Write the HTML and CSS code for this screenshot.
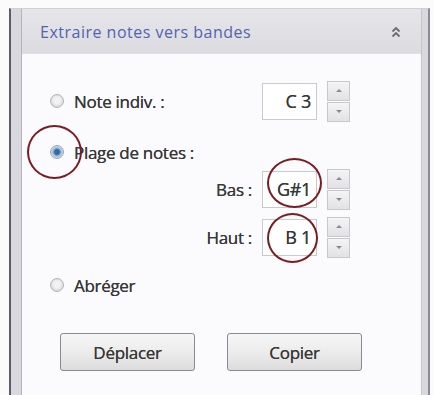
FILE: index.html
```html
<!DOCTYPE html>
<html lang="fr">
<head>
<meta charset="utf-8">
<link rel="stylesheet" href="styles.css">
</head>
<body>
<div class="screen">
  <div class="frame">
    <div class="panel">
      <div class="header">
        <span class="title">Extraire notes vers bandes</span>
        <svg class="chev" width="10" height="12" viewBox="0 0 10 12">
          <path d="M1.5 5.5 L5 2 L8.5 5.5 M1.5 10.5 L5 7 L8.5 10.5" fill="none" stroke="#6a6a70" stroke-width="1.8"/>
        </svg>
      </div>
      <div class="body">
        <div class="row r1">
          <label class="opt"><span class="radio"></span><span>Note indiv. :</span></label>
          <div class="field">
            <div class="box">C 3</div>
            <div class="spin"><span class="up"></span><span class="down"></span></div>
          </div>
        </div>
        <div class="row r2">
          <label class="opt"><span class="radio on"></span><span>Plage de notes :</span></label>
        </div>
        <div class="row r3">
          <span class="lbl">Bas :</span>
          <div class="field">
            <div class="box">G#1</div>
            <div class="spin"><span class="up"></span><span class="down"></span></div>
          </div>
        </div>
        <div class="row r4">
          <span class="lbl">Haut :</span>
          <div class="field">
            <div class="box">B 1</div>
            <div class="spin"><span class="up"></span><span class="down"></span></div>
          </div>
        </div>
        <div class="row r5">
          <label class="opt"><span class="radio"></span><span>Abréger</span></label>
        </div>
        <div class="buttons">
          <button class="btn">Déplacer</button>
          <button class="btn">Copier</button>
        </div>
        <span class="mark m1"></span>
        <span class="mark m2"></span>
        <span class="mark m3"></span>
      </div>
    </div>
  </div>
</div>
</body>
</html>
```

FILE: styles.css
```css
html, body {
  margin: 0;
  padding: 0;
  background: #fbfbfc;
}
body {
  font-family: "Open Sans", "Noto Sans", sans-serif;
  color: #383838;
}
.screen {
  width: 434px;
  height: 395px;
  padding: 8px 4px 0 9px;
  box-sizing: border-box;
  overflow: hidden;
}
.frame {
  height: 100%;
  box-sizing: border-box;
  border-left: 2px solid #5c5c68;
  border-right: 2px solid #8a8a96;
  border-top: 1px solid #d0d0d6;
  background: #d8d8de;
  padding: 0 6px 0 10px;
}
.panel {
  height: 100%;
  box-sizing: border-box;
  border-left: 1px solid #b4b4bc;
  border-right: 1px solid #c4c4cc;
  background: #fbfafd;
  display: flex;
  flex-direction: column;
}
.header {
  height: 44px;
  flex: none;
  display: flex;
  align-items: center;
  justify-content: space-between;
  padding: 0 20px 0 18px;
  background: linear-gradient(#e6e6ea, #dcdce0);
  border-bottom: 1px solid #e0e0e4;
}
.title {
  font-size: 16px;
  color: #5064b0;
  letter-spacing: 0.5px;
  margin-top: 2px;
}
.chev { margin-top: 2px; }
.body {
  position: relative;
  flex: 1;
  padding: 26px 0 0 28px;
}
.row {
  display: flex;
  align-items: center;
  height: 42px;
}
.opt {
  display: flex;
  align-items: center;
  gap: 10px;
  font-size: 17px;
  letter-spacing: -0.3px;
  text-shadow: 0 0 0.4px #383838;
}
.radio {
  width: 14px;
  height: 14px;
  border-radius: 50%;
  box-sizing: border-box;
  border: 1px solid #b4b4ba;
  background: radial-gradient(circle at 50% 45%, #f2f2f4 0 35%, #d4d4d8 80%);
}
.radio.on {
  background: radial-gradient(circle at 50% 50%, #2f6ca8 0 28%, #8fb3d6 45%, #d6dbe2 70%);
  border-color: #9aa6b4;
}
.r1 { justify-content: space-between; padding-right: 71px; }
.r2 { height: 26px; margin-top: 17px; }
.r3, .r4 { justify-content: flex-end; padding-right: 71px; gap: 10px; }
.r3 { margin-top: 3px; }
.r4 { margin-top: 6px; }
.r5 { height: 26px; margin-top: 14px; }
.lbl {
  font-size: 17px;
  letter-spacing: -0.3px;
  text-shadow: 0 0 0.4px #383838;
}
.field {
  display: flex;
  align-items: center;
  gap: 10px;
}
.box {
  width: 55px;
  height: 37px;
  box-sizing: border-box;
  border: 1px solid #cacace;
  background: #fff;
  font-size: 18px;
  text-align: right;
  line-height: 35px;
  padding-right: 5px;
  color: #383838;
  letter-spacing: -0.3px;
  text-shadow: 0 0 0.4px #383838;
}
.spin {
  width: 23px;
  height: 41px;
  display: flex;
  flex-direction: column;
  gap: 1px;
}
.spin span {
  flex: 1;
  border: 1px solid #c8c8cc;
  background: linear-gradient(#f4f4f6, #e2e2e6);
  position: relative;
}
.spin span::after {
  content: "";
  position: absolute;
  left: 8px;
  top: 7px;
  border-left: 3px solid transparent;
  border-right: 3px solid transparent;
}
.spin .up::after { border-bottom: 3px solid #8a8a8e; }
.spin .down::after { border-top: 3px solid #8a8a8e; }
.buttons {
  display: flex;
  gap: 32px;
  margin-top: 35px;
  padding-left: 10px;
}
.btn {
  width: 135px;
  height: 38px;
  font-family: inherit;
  font-size: 17px;
  color: #383838;
  border: 1px solid #8a8a8e;
  border-radius: 3px;
  background: linear-gradient(#f6f6f6 0, #ececec 50%, #dcdcdc 100%);
  letter-spacing: -0.3px;
  text-shadow: 0 0 0.4px #383838;
}
.mark {
  position: absolute;
  border: 2px solid #7a1c24;
  border-radius: 50%;
  box-sizing: border-box;
}
.m1 { left: 5px; top: 71px; width: 55px; height: 54px; }
.m2 { left: 245px; top: 104px; width: 55px; height: 50px; }
.m3 { left: 245px; top: 159px; width: 51px; height: 50px; }
```
